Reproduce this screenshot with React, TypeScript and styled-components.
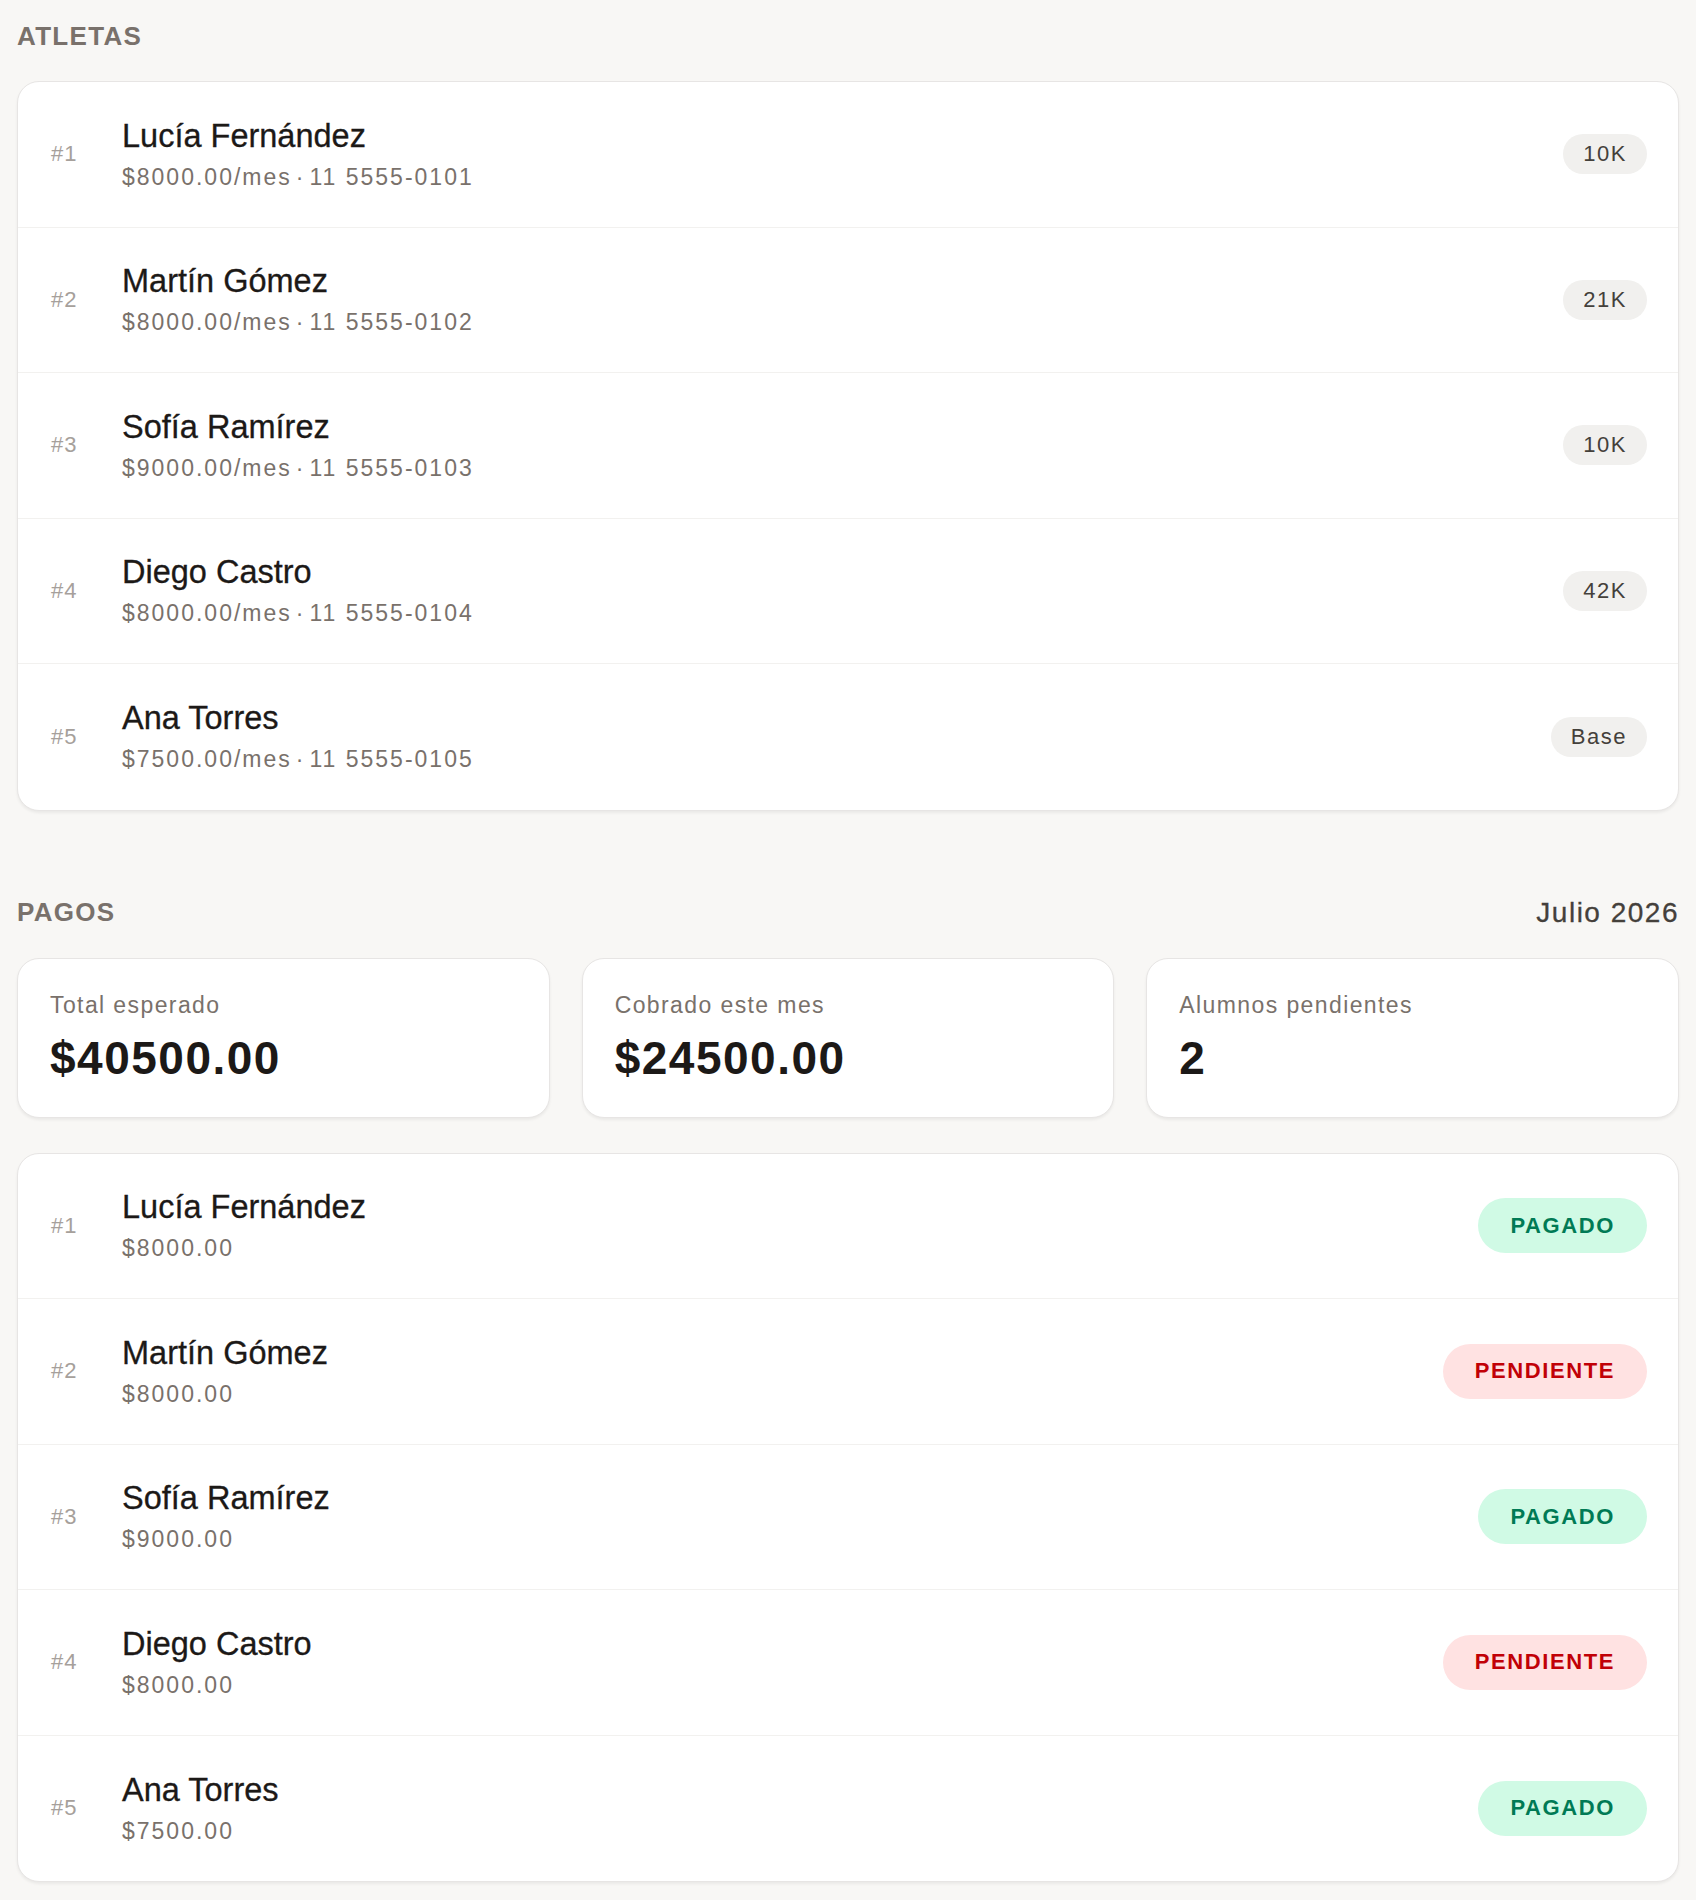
import React from "react";
import styled, { createGlobalStyle } from "styled-components";

type Athlete = {
  name: string;
  fee: string;
  phone: string;
  tag: string;
};

type Payment = {
  name: string;
  amount: string;
  paid: boolean;
};

const athletes: Athlete[] = [
  { name: "Lucía Fernández", fee: "$8000.00", phone: "11 5555-0101", tag: "10K" },
  { name: "Martín Gómez", fee: "$8000.00", phone: "11 5555-0102", tag: "21K" },
  { name: "Sofía Ramírez", fee: "$9000.00", phone: "11 5555-0103", tag: "10K" },
  { name: "Diego Castro", fee: "$8000.00", phone: "11 5555-0104", tag: "42K" },
  { name: "Ana Torres", fee: "$7500.00", phone: "11 5555-0105", tag: "Base" },
];

const payments: Payment[] = [
  { name: "Lucía Fernández", amount: "$8000.00", paid: true },
  { name: "Martín Gómez", amount: "$8000.00", paid: false },
  { name: "Sofía Ramírez", amount: "$9000.00", paid: true },
  { name: "Diego Castro", amount: "$8000.00", paid: false },
  { name: "Ana Torres", amount: "$7500.00", paid: true },
];

const stats = [
  { label: "Total esperado", value: "$40500.00" },
  { label: "Cobrado este mes", value: "$24500.00" },
  { label: "Alumnos pendientes", value: "2" },
];

const App = () => {
  return (
    <>
      <GlobalStyle />
      <Page>
        <Section>
          <Header>
            <SectionTitle>ATLETAS</SectionTitle>
          </Header>
          <ListCard>
            {athletes.map((a, i) => (
              <Row key={a.name}>
                <Index>#{i + 1}</Index>
                <Info>
                  <Name>{a.name}</Name>
                  <Sub>
                    {a.fee}/mes<Dot>·</Dot>{a.phone}
                  </Sub>
                </Info>
                <Tag>{a.tag}</Tag>
              </Row>
            ))}
          </ListCard>
        </Section>

        <Section>
          <Header>
            <SectionTitle>PAGOS</SectionTitle>
            <Month>Julio 2026</Month>
          </Header>
          <StatGrid>
            {stats.map((s) => (
              <StatCard key={s.label}>
                <StatLabel>{s.label}</StatLabel>
                <StatValue>{s.value}</StatValue>
              </StatCard>
            ))}
          </StatGrid>
          <ListCard>
            {payments.map((p, i) => (
              <Row key={p.name}>
                <Index>#{i + 1}</Index>
                <Info>
                  <Name>{p.name}</Name>
                  <Sub>{p.amount}</Sub>
                </Info>
                <Status $paid={p.paid}>{p.paid ? "PAGADO" : "PENDIENTE"}</Status>
              </Row>
            ))}
          </ListCard>
        </Section>
      </Page>
    </>
  );
};

export default App;

const GlobalStyle = createGlobalStyle`
  * {
    box-sizing: border-box;
  }
  body {
    margin: 0;
    background: #f8f7f5;
    font-family: "Liberation Sans", Arial, sans-serif;
    color: #1c1917;
  }
`;

const Page = styled.div`
  display: flex;
  flex-direction: column;
  gap: 82px;
  padding: 16px 17px 17px;
`;

const Section = styled.section`
  display: flex;
  flex-direction: column;
`;

const Header = styled.div`
  display: flex;
  align-items: center;
  justify-content: space-between;
  height: 40px;
  margin-bottom: 25px;
`;

const SectionTitle = styled.h2`
  margin: 0;
  font-size: 26px;
  font-weight: 700;
  letter-spacing: 1.3px;
  color: #79716b;
`;

const Month = styled.div`
  font-size: 28px;
  letter-spacing: 1.5px;
  color: #44403b;
  -webkit-text-stroke: 0.3px #44403b;
`;

const ListCard = styled.div`
  background: #fff;
  border: 1px solid #e7e5e4;
  border-radius: 22px;
  box-shadow: 0 2px 3px rgba(0, 0, 0, 0.06);
  overflow: hidden;
`;

const Row = styled.div`
  display: flex;
  align-items: center;
  height: 145.5px;
  padding: 0 31px 0 33px;
  border-bottom: 1px solid #f2f1ef;

  &:last-child {
    border-bottom: none;
  }
`;

const Index = styled.div`
  width: 71px;
  flex-shrink: 0;
  font-size: 22px;
  letter-spacing: 1px;
  color: #a6a09b;
`;

const Info = styled.div`
  display: flex;
  flex-direction: column;
  flex: 1;
  gap: 7px;
`;

const Name = styled.div`
  font-size: 32.5px;
  line-height: 38px;
  color: #1c1917;
  -webkit-text-stroke: 0.3px #1c1917;
`;

const Sub = styled.div`
  font-size: 23px;
  line-height: 30px;
  letter-spacing: 2px;
  color: #79716b;
`;

const Dot = styled.span`
  margin: 0 6px 0 4px;
  letter-spacing: 0;
`;

const Tag = styled.span`
  display: inline-flex;
  align-items: center;
  height: 40px;
  padding: 0 20px;
  border-radius: 999px;
  background: #f1f0ee;
  color: #44403b;
  font-size: 22px;
  letter-spacing: 1.5px;
`;

const Status = styled.span<{ $paid: boolean }>`
  display: inline-flex;
  align-items: center;
  height: 55px;
  padding: 0 32px;
  border-radius: 999px;
  background: ${(p) => (p.$paid ? "#d0fae5" : "#ffe2e2")};
  color: ${(p) => (p.$paid ? "#007a55" : "#c10007")};
  font-size: 22px;
  font-weight: 700;
  letter-spacing: 1.6px;
`;

const StatGrid = styled.div`
  display: grid;
  grid-template-columns: repeat(3, 1fr);
  gap: 32px;
  margin-bottom: 35px;
`;

const StatCard = styled.div`
  display: flex;
  flex-direction: column;
  gap: 12px;
  padding: 31px 32px 33px;
  background: #fff;
  border: 1px solid #e7e5e4;
  border-radius: 22px;
  box-shadow: 0 2px 3px rgba(0, 0, 0, 0.06);
`;

const StatLabel = styled.div`
  font-size: 23px;
  line-height: 30px;
  letter-spacing: 1.4px;
  color: #79716b;
`;

const StatValue = styled.div`
  font-size: 46px;
  line-height: 52px;
  font-weight: 700;
  letter-spacing: 1.5px;
  color: #1c1917;
`;
